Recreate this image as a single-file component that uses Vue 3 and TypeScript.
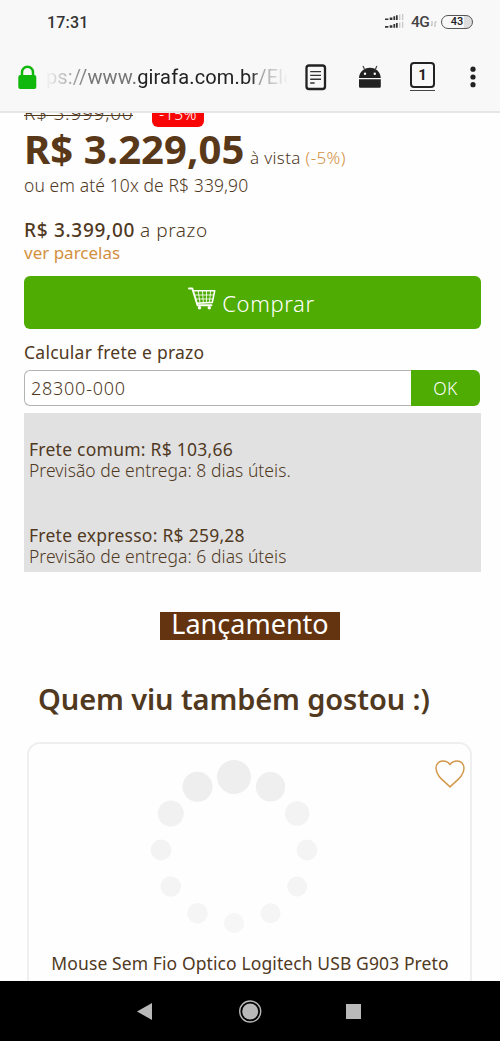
<script setup lang="ts">
interface Dot { x: number; y: number; r: number; o: number }

const radii = [17, 14.7, 12.2, 10.4, 10, 10, 10, 10.2, 10.2, 10.4, 13, 15]
const fills = [1, 0.95, 0.72, 0.66, 0.62, 0.6, 0.55, 0.6, 0.65, 0.68, 0.85, 1]
const dots: Dot[] = radii.map((r, i) => {
  const a = (i * Math.PI) / 6
  return { x: 90 + 73 * Math.sin(a), y: 90 - 73 * Math.cos(a), r, o: fills[i] }
})

const quotes = [
  { name: 'Frete comum: R$ 103,66', eta: 'Previsão de entrega: 8 dias úteis.' },
  { name: 'Frete expresso: R$ 259,28', eta: 'Previsão de entrega: 6 dias úteis' },
]
</script>

<template>
  <div class="phone">
    <header class="top">
      <div class="status">
        <span class="time">17:31</span>
        <svg class="signal" width="20" height="16" viewBox="0 0 20 16">
          <g fill="#333">
            <path d="M0 4.5h3.4V6H0zM4.7 3.6h2.7V6H4.7zM8.4 2.3h1.8V6H8.4zM11 1.3h1.7V6H11z" />
            <path d="M0 12h3.4v1.7H0zM4.7 11.2h2.7v2.5H4.7zM8.4 10h1.8v3.7H8.4zM11 9h1.7v4.7H11z" />
          </g>
          <path fill="#c9c9c9" d="M14 .6h1.4V6H14zM17 0h1.3v6H17zM14 8.4h1.4v5.3H14zM17 7.8h1.3v5.9H17z" />
        </svg>
        <span class="net">4G</span>
        <svg class="updown" width="6" height="6" viewBox="0 0 6 6"><path d="M1 0v5M0 4.4h1M4 6V1M4 1h1.6" stroke="#aaa" stroke-width=".9" fill="none" /></svg>
        <span class="battery">43</span>
      </div>
      <div class="toolbar">
        <svg class="lock" width="19" height="25" viewBox="0 0 19 25">
          <path d="M4 12V7.3a5.5 5.5 0 0 1 11 0V12" fill="none" stroke="#10b70d" stroke-width="2.5" />
          <rect x=".3" y="10" width="18" height="14" rx="2" fill="#10b70d" />
        </svg>
        <div class="url"><span class="dim">ps://www.</span>girafa.com.br<span class="dim path">/Ele</span></div>
        <svg class="reader" width="22" height="27" viewBox="0 0 22 27">
          <rect x="1.5" y="1.5" width="18.5" height="23.5" rx="2.6" fill="none" stroke="#222" stroke-width="2.3" />
          <path d="M5.2 7.6h10.8M5.2 11.4h10.8M5.2 15.2h10.8M5.2 19h4.4" stroke="#333" stroke-width="1.4" />
        </svg>
        <svg class="droid" width="24" height="24" viewBox="0 0 24 24">
          <path d="M1 13C1.2 7.500 5.800 2.700 12 2.700S22.600 7.500 22.800 13zM1 14.200h21.800v7.300q0 1.200-1.200 1.200H2.200Q1 22.700 1 21.500z" fill="#222" />
          <path d="M6.900 5L5.200 1.400M17 5l1.700-3.600" stroke="#444" stroke-width="1.200" stroke-linecap="round" />
          <circle cx="7" cy="8.700" r="1.200" fill="#fff" /><circle cx="16.800" cy="8.700" r="1.200" fill="#fff" />
        </svg>
        <div class="tabs"><span>1</span></div>
        <svg class="more" width="6" height="22" viewBox="0 0 6 22"><g fill="#222"><circle cx="3" cy="3.200" r="2.600" /><circle cx="3" cy="11" r="2.600" /><circle cx="3" cy="18.700" r="2.600" /></g></svg>
      </div>
    </header>

    <main class="page">
      <div class="old">
        <div class="was"><s>R$ 3.999,00</s></div>
        <span class="off">-15%</span>
      </div>
      <div class="price">
        <strong>R$ 3.229,05</strong>
        <span class="cash">à vista <em>(-5%)</em></span>
      </div>
      <div class="split">ou em até 10x de R$ 339,90</div>
      <div class="term"><b>R$ 3.399,00</b><span>a prazo</span></div>
      <a class="parcels">ver parcelas</a>

      <button class="buy">
        <svg width="29" height="24" viewBox="0 0 29 24">
          <g fill="none" stroke="#fff" stroke-linecap="round" stroke-linejoin="round">
            <path d="M1 1.500h3.300L9.500 18.300h14" stroke-width="1.900" />
            <path d="M5.800 3.800h20.900l-2.400 11.600-15.200.8" stroke-width="1.600" />
            <path d="M10.300 4.300l1.700 11.500M14.500 4.300l.8 11.200M18.500 4.300l-.1 11.200M22.600 4.300l-1.100 11M7.200 8h18.200M8.200 12h16.300" stroke-width=".85" />
          </g>
          <circle cx="11.500" cy="20.700" r="1.700" fill="#fff" /><circle cx="21.300" cy="20.700" r="1.700" fill="#fff" />
        </svg>
        <span>Comprar</span>
      </button>

      <div class="label">Calcular frete e prazo</div>
      <div class="zip">
        <div class="field">28300-000</div>
        <button class="ok">OK</button>
      </div>
      <div class="quotes">
        <div v-for="q in quotes" :key="q.name" class="quote">
          <div class="name">{{ q.name }}</div>
          <div class="eta">{{ q.eta }}</div>
        </div>
      </div>

      <div class="launch">Lançamento</div>
      <h2>Quem viu também gostou :)</h2>

      <article class="card">
        <svg class="heart" width="32" height="30" viewBox="0 0 32 30">
          <path d="M16 28C11 22.500 2 17.500 2 9.300 2 5 5 2 8.800 2 12 2 14.500 3.200 16 5.700 17.500 3.200 20 2 23.200 2 27 2 30 5 30 9.300 30 17.500 21 22.500 16 28z" fill="none" stroke="#d2984c" stroke-width="1.500" stroke-linejoin="round" />
        </svg>
        <svg class="loader" width="180" height="180" viewBox="0 0 180 180">
          <circle v-for="(d, i) in dots" :key="i" :cx="d.x" :cy="d.y" :r="d.r" :fill-opacity="d.o" fill="#eeeeee" />
        </svg>
        <div class="product">Mouse Sem Fio Optico Logitech USB G903 Preto</div>
      </article>
    </main>

    <nav class="keys">
      <svg width="500" height="60" viewBox="0 0 500 60">
        <path d="M137 30.500L152 22v17z" fill="#b9b9b9" />
        <circle cx="250.200" cy="30.500" r="10.500" fill="none" stroke="#b9b9b9" stroke-width="1.400" />
        <circle cx="250.200" cy="30.500" r="8" fill="#b9b9b9" />
        <path d="M346 23h15v15h-15z" fill="#b9b9b9" />
      </svg>
    </nav>
  </div>
</template>

<style>
body { background: #fff; }
</style>

<style scoped>
.phone {
  display: flex;
  flex-direction: column;
  width: 500px;
  height: 1041px;
  overflow: hidden;
  background: #fefefe;
  color: #50391f;
  font-family: "Noto Sans", "Open Sans", sans-serif;
  font-size: 17.5px;
  white-space: nowrap;
}
button { border: 0; padding: 0; margin: 0; font-family: inherit; color: #fff; }

.top {
  flex: none;
  box-sizing: border-box;
  height: 113px;
  background: #f8f8f8;
  border-bottom: 2px solid #e6e6e6;
  font-family: Roboto, sans-serif;
  color: #222;
}
.status { display: flex; align-items: center; height: 44px; padding: 0 27px 0 47px; }
.time { font-size: 16px; font-weight: 500; letter-spacing: .2px; flex: 1; color: #333; }
.signal { margin-right: 6px; }
.net { font-size: 15.5px; font-weight: 500; color: #444; width: 20px; letter-spacing: -.6px; }
.updown { margin: 4px 4px 0 0; }
.battery {
  box-sizing: border-box;
  width: 32px;
  height: 14px;
  border: 1.500px solid #555;
  border-radius: 7px;
  background: linear-gradient(90deg, transparent 72%, #ddd 72%);
  font-size: 11px;
  font-weight: 500;
  line-height: 12px;
  text-align: center;
}
.toolbar { display: flex; align-items: center; height: 66px; padding: 0 24px 0 18px; }
.lock { margin-right: 8px; }
.url {
  display: flex;
  justify-content: flex-end;
  width: 243px;
  overflow: hidden;
  font-size: 20px;
  line-height: 28px;
  letter-spacing: .15px;
  -webkit-mask-image: linear-gradient(90deg, transparent, #000 44px, #000 203px, transparent 243px);
  mask-image: linear-gradient(90deg, transparent, #000 44px, #000 203px, transparent 243px);
}
.dim { color: #777; }
.path { margin-right: -6px; }
.reader { margin-left: 17px; }
.droid { margin-left: 31px; }
.tabs {
  margin: -1px 0 0 28px;
  width: 25px;
  height: 28px;
  border-bottom: 1.500px solid #444;
}
.tabs span {
  display: block;
  box-sizing: border-box;
  height: 26px;
  border: 2.300px solid #222;
  border-radius: 4px;
  font: 700 15px/22px Roboto, sans-serif;
  text-align: center;
}
.more { margin-left: auto; }

.page { flex: 1; min-height: 0; overflow: hidden; padding: 0 19px 0 24px; }
.old { display: flex; align-items: flex-end; height: 17px; }
.was { width: 128px; height: 22px; margin-bottom: 6px; font-size: 19px; line-height: 22px; font-weight: 300; letter-spacing: .75px; }
.was s {
  display: inline-block;
  height: 22px;
  text-decoration: none;
  background: linear-gradient(#50391f, #50391f) 0 13px / 100% 1px no-repeat;
}
.off {
  width: 52px;
  margin-bottom: 3px;
  padding-bottom: 3px;
  border-radius: 6px;
  background: #fa0505;
  color: #fff;
  font-size: 16px;
  line-height: 20px;
  font-weight: 300;
  letter-spacing: .4px;
  text-align: center;
}
.price { display: flex; align-items: baseline; height: 38px; line-height: 38px; }
.price strong { width: 226px; font-size: 40px; font-weight: 700; letter-spacing: .1px; color: #583819; }
.cash { font-size: 17px; font-weight: 300; letter-spacing: .35px; }
.cash em { font-style: normal; color: #d2903f; }
.split { margin-top: 5px; line-height: 24px; font-weight: 300; letter-spacing: .1px; }
.term { display: flex; margin-top: 20px; font-size: 19px; line-height: 26px; font-weight: 300; }
.term b { width: 116px; font-weight: 500; letter-spacing: .7px; }
.term span { letter-spacing: .55px; }
.parcels { display: block; margin-top: -1px; font-size: 17px; line-height: 21px; color: #d2903f; }
.buy {
  display: flex;
  align-items: center;
  justify-content: center;
  width: 457px;
  height: 53px;
  margin-top: 13px;
  border-radius: 6px;
  background: #4eac02;
  font-size: 22px;
  font-weight: 300;
  letter-spacing: .6px;
}
.buy svg { margin: -7px 5px 0 -2px; }
.label { margin-top: 11px; line-height: 24px; letter-spacing: .25px; }
.zip { display: flex; width: 456px; height: 36px; margin-top: 6px; }
.field {
  flex: 1;
  box-sizing: border-box;
  padding-left: 6px;
  border: 1.500px solid #b3b3b3;
  border-right: 0;
  border-radius: 6px 0 0 6px;
  background: #fff;
  font-size: 18px;
  line-height: 34px;
  font-weight: 300;
  letter-spacing: .75px;
}
.ok { width: 69px; border-radius: 0 6px 6px 0; background: #4eac02; font-size: 17.500px; font-weight: 300; letter-spacing: .4px; }
.quotes { box-sizing: border-box; width: 457px; height: 159px; margin-top: 6.500px; padding: 26px 5px 0; background: #e1e1e1; }
.quote { height: 86px; line-height: 21.300px; }
.name { letter-spacing: .25px; }
.eta { font-weight: 300; letter-spacing: .04px; }
.launch {
  width: 180px;
  height: 28.500px;
  margin: 40px auto 0 136px;
  background: #643410;
  color: #fff;
  font-size: 27px;
  line-height: 24px;
  text-align: center;
}
h2 { margin: 38.500px 0 0 14px; font-size: 29px; line-height: 40px; font-weight: 600; letter-spacing: -.1px; }
.card {
  position: relative;
  box-sizing: border-box;
  width: 445px;
  height: 300px;
  margin: 23px 0 0 3px;
  border: 2px solid #efefef;
  border-radius: 13px;
}
.heart { position: absolute; top: 15px; right: 4px; }
.loader { display: block; margin: 16px 0 0 115px; }
.product { margin-top: 11px; padding-left: 1px; line-height: 24px; text-align: center; letter-spacing: .1px; }

.keys { flex: none; height: 60.500px; background: #000; }
.keys svg { display: block; }
</style>
